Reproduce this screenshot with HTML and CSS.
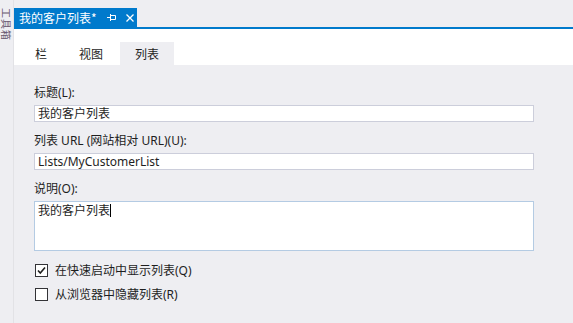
FILE: index.html
```html
<!DOCTYPE html>
<html lang="zh-CN">
<head>
<meta charset="utf-8">
<link rel="stylesheet" href="styles.css">
</head>
<body>
<div class="app">
  <div class="sidebar"><span class="sidebar-text">工具箱</span></div>
  <div class="main">
    <div class="doc-tabs">
      <div class="doc-tab">
        <span class="doc-title">我的客户列表*</span>
        <svg class="pin" width="9" height="7" viewBox="0 0 9 7"><path d="M0 3.5H3M3.5 0V7M3.5 1.5H8.5V5.5H3.5" fill="none" stroke="#fff" stroke-width="1"/></svg>
        <svg class="close" width="8" height="8" viewBox="0 0 8 8"><path d="M0.5 0.5L7.5 7.5M7.5 0.5L0.5 7.5" stroke="#fff" stroke-width="1.3"/></svg>
      </div>
    </div>
    <div class="doc-line"></div>
    <div class="subtabs">
      <div class="subtab first">栏</div>
      <div class="subtab">视图</div>
      <div class="subtab active">列表</div>
    </div>
    <div class="form">
      <div class="label">标题(L):</div>
      <div class="input">我的客户列表</div>
      <div class="label">列表 URL (网站相对 URL)(U):</div>
      <div class="input">Lists/MyCustomerList</div>
      <div class="label">说明(O):</div>
      <div class="textarea">我的客户列表<span class="caret"></span></div>
      <div class="checks">
        <div class="check-row">
          <span class="box"><svg width="11" height="11" viewBox="0 0 11 11"><path d="M2 5.5L4.3 8L9 2.5" fill="none" stroke="#1e1e1e" stroke-width="1.6"/></svg></span>
          <span class="check-label">在快速启动中显示列表(Q)</span>
        </div>
        <div class="check-row">
          <span class="box"></span>
          <span class="check-label">从浏览器中隐藏列表(R)</span>
        </div>
      </div>
    </div>
  </div>
</div>
</body>
</html>
```
FILE: styles.css
```css
* { box-sizing: border-box; }
html, body { margin: 0; padding: 0; }
body {
  width: 573px;
  height: 323px;
  overflow: hidden;
  background: #eeeef2;
  font-family: "Noto Sans", "Noto Sans CJK SC", sans-serif;
  font-size: 12px;
  color: #1e1e1e;
}
.app { display: flex; height: 323px; }
.sidebar {
  width: 14px;
  flex: none;
  padding-left: 1px;
  border-right: 1px solid #e2e2e6;
}
.sidebar-text {
  display: block;
  writing-mode: vertical-rl;
  text-orientation: sideways;
  font-family: "Noto Sans CJK SC", sans-serif;
  font-size: 10px;
  line-height: 10px;
  width: 10px;
  color: #6a5a70;
  margin-top: 8px;
  letter-spacing: 1px;
}
.main { flex: 1; display: flex; flex-direction: column; }
.doc-tabs { height: 27px; padding-top: 8px; display: flex; }
.doc-tab {
  background: #007acc;
  width: 123px;
  display: flex;
  align-items: center;
  padding-left: 5px;
  color: #fff;
}
.doc-title { font-family: "Noto Sans CJK SC", sans-serif; line-height: 16px; }
.pin { margin-left: 10px; }
.close { margin-left: 10px; }
.doc-line { height: 2px; background: #007acc; }
.subtabs {
  background: #fff;
  height: 36px;
  display: flex;
  align-items: flex-end;
  padding-left: 6px;
  gap: 2px;
}
.subtab {
  height: 23px;
  padding: 0 15px;
  line-height: 23px;
  font-family: "Noto Sans CJK SC", sans-serif;
}
.subtab.active { background: #eeeef2; }
.form { padding: 20px 0 0 20px; width: 520px; }
.label { height: 16px; line-height: 16px; margin-bottom: 4px; }
.input {
  height: 17px;
  line-height: 15px;
  background: #fff;
  border: 1px solid #cccedb;
  padding-left: 3px;
  margin-bottom: 11px;
}
.textarea {
  height: 50px;
  background: #fff;
  border: 1px solid #b4cbe3;
  padding: 1px 3px;
  line-height: 16px;
}
.caret {
  display: inline-block;
  width: 1px;
  height: 13px;
  background: #000;
  vertical-align: -2px;
}
.checks { padding-top: 13px; display: flex; flex-direction: column; gap: 11px; padding-left: 1px; }
.check-row { display: flex; align-items: center; height: 13px; }
.box {
  width: 13px;
  height: 13px;
  border: 1px solid #333337;
  background: #fff;
  display: flex;
  align-items: center;
  justify-content: center;
}
.check-label { margin-left: 7px; line-height: 16px; }
```
